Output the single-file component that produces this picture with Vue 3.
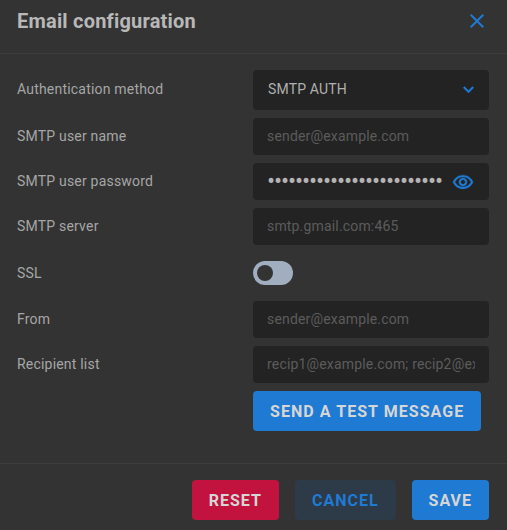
<template>
  <div class="dialog">
    <header class="dialog-header">
      <h2 class="dialog-title">Email configuration</h2>
      <button class="close-btn" title="Close">
        <svg viewBox="0 0 24 24" width="24" height="24">
          <path d="M19 6.41 17.59 5 12 10.59 6.41 5 5 6.41 10.59 12 5 17.59 6.41 19 12 13.41 17.59 19 19 17.59 13.41 12z" fill="currentColor" />
        </svg>
      </button>
    </header>

    <div class="dialog-body">
      <div class="form-row">
        <label class="form-label">Authentication method</label>
        <div class="select-box">
          <span>SMTP AUTH</span>
          <svg class="chevron" viewBox="0 0 24 24" width="21" height="21">
            <path d="M7.41 8.59 12 13.17l4.59-4.58L18 10l-6 6-6-6z" fill="currentColor" stroke="currentColor" stroke-width="0.5" />
          </svg>
        </div>
      </div>

      <div class="form-row">
        <label class="form-label">SMTP user name</label>
        <div class="input-box">
          <input class="text-input" type="text" placeholder="sender@example.com">
        </div>
      </div>

      <div class="form-row">
        <label class="form-label">SMTP user password</label>
        <div class="input-box">
          <input class="text-input password-input" type="password" value="aaaaaaaaaaaaaaaaaaaaaaaaa">
          <svg class="eye" viewBox="0 0 24 24" width="22" height="22">
            <path d="M12 6.5c3.79 0 7.17 2.13 8.82 5.5-1.65 3.37-5.02 5.5-8.82 5.5S4.83 15.37 3.18 12C4.83 8.63 8.21 6.5 12 6.5m0-2C7 4.5 2.73 7.61 1 12c1.73 4.39 6 7.5 11 7.5s9.27-3.11 11-7.5c-1.73-4.39-6-7.5-11-7.5zm0 5c1.38 0 2.5 1.12 2.5 2.5s-1.12 2.5-2.5 2.5-2.5-1.12-2.5-2.5 1.12-2.5 2.5-2.5m0-2c-2.48 0-4.5 2.02-4.5 4.5s2.02 4.5 4.5 4.5 4.5-2.02 4.5-4.5-2.02-4.5-4.5-4.5z" fill="currentColor" stroke="currentColor" stroke-width="0.4" />
          </svg>
        </div>
      </div>

      <div class="form-row">
        <label class="form-label">SMTP server</label>
        <div class="input-box">
          <input class="text-input" type="text" placeholder="smtp.gmail.com:465">
        </div>
      </div>

      <div class="form-row toggle-row">
        <label class="form-label ssl-label">SSL</label>
        <div class="control">
          <div class="toggle"><span class="toggle-knob"></span></div>
        </div>
      </div>

      <div class="form-row">
        <label class="form-label">From</label>
        <div class="input-box">
          <input class="text-input" type="text" placeholder="sender@example.com">
        </div>
      </div>

      <div class="form-row">
        <label class="form-label">Recipient list</label>
        <div class="input-box">
          <input class="text-input" type="text" placeholder="recip1@example.com; recip2@example.com">
        </div>
      </div>

      <div class="form-row">
        <span class="form-label"></span>
        <div class="control">
          <button class="btn btn-primary test-btn">Send a test message</button>
        </div>
      </div>
    </div>

    <footer class="dialog-footer">
      <button class="btn btn-danger">Reset</button>
      <button class="btn btn-muted">Cancel</button>
      <button class="btn btn-primary">Save</button>
    </footer>
  </div>
</template>

<script setup>
</script>

<style>
html,
body {
  margin: 0;
  background: #333333;
}
</style>

<style scoped>
.dialog {
  width: 507px;
  height: 530px;
  background: #333333;
  display: flex;
  flex-direction: column;
  font-family: Roboto, "Liberation Sans", sans-serif;
  color: #b3b3b3;
  overflow: hidden;
}

.dialog-header {
  height: 53px;
  box-sizing: content-box;
  border-bottom: 1px solid #3d3d3d;
  display: flex;
  align-items: flex-start;
  justify-content: space-between;
  padding: 0 18px 0 17px;
}

.dialog-title {
  margin: 0;
  padding-top: 9px;
  font-size: 20px;
  line-height: 24px;
  font-weight: 700;
  letter-spacing: 0.2px;
  color: #b8b8b8;
}

.close-btn {
  border: none;
  background: none;
  padding: 0;
  margin-top: 9px;
  width: 24px;
  height: 24px;
  color: #1f7ad4;
}

.dialog-body {
  flex: 1;
  padding: 16px 18px 0 17px;
  display: flex;
  flex-direction: column;
  gap: 8px;
}

.form-row {
  display: flex;
  align-items: center;
}

.form-label {
  width: 236px;
  flex-shrink: 0;
  padding-bottom: 2px;
  font-size: 14px;
  letter-spacing: 0.2px;
  color: #a6a6a6;
}

.ssl-label {
  padding-bottom: 0;
}

.select-box,
.input-box {
  flex: 1;
  min-width: 0;
  display: flex;
  align-items: center;
  background: #232323;
  border-radius: 4px;
  box-sizing: border-box;
  font-size: 14px;
  letter-spacing: 0.17px;
}

.select-box {
  height: 40px;
  justify-content: space-between;
  padding: 0 15px 2px;
  color: #b0b0b0;
}

.chevron {
  color: #1f7ad4;
  margin-right: -5px;
}

.input-box {
  height: 37px;
  padding: 0 14px;
}

.text-input {
  flex: 1;
  width: 0;
  min-width: 0;
  border: none;
  outline: none;
  padding: 0 0 2px;
  background: transparent;
  font-family: inherit;
  font-size: 14px;
  letter-spacing: inherit;
  color: #b3b3b3;
}

.text-input::placeholder {
  color: #5c5c5c;
  opacity: 1;
}

.password-input {
  font-size: 24px;
  letter-spacing: -1.1px;
}

.eye {
  color: #1f7ad4;
  margin-left: 8px;
  margin-right: 1px;
  flex-shrink: 0;
}

.control {
  flex: 1;
  display: flex;
  align-items: center;
}

.toggle-row {
  height: 40px;
}

.toggle {
  width: 40px;
  height: 24px;
  border-radius: 12px;
  background: #a0aec0;
  display: flex;
  align-items: center;
  padding-left: 4px;
  box-sizing: border-box;
}

.toggle-knob {
  width: 16px;
  height: 16px;
  border-radius: 50%;
  background: #333333;
}

.btn {
  height: 40px;
  border: none;
  border-radius: 4px;
  padding: 0 17px;
  font-family: inherit;
  font-size: 16px;
  font-weight: 700;
  letter-spacing: 1px;
  text-transform: uppercase;
  color: #d6d6d6;
}

.test-btn {
  letter-spacing: 1.05px;
}

.btn-primary {
  background: #1f7ad4;
}

.btn-danger {
  background: #c2133e;
}

.btn-muted {
  background: #2d3a48;
  color: #1f7ad4;
}

.dialog-footer {
  height: 67px;
  border-top: 1px solid #3d3d3d;
  display: flex;
  justify-content: flex-end;
  gap: 16px;
  padding: 16px 18px 0 0;
  box-sizing: border-box;
}
</style>
